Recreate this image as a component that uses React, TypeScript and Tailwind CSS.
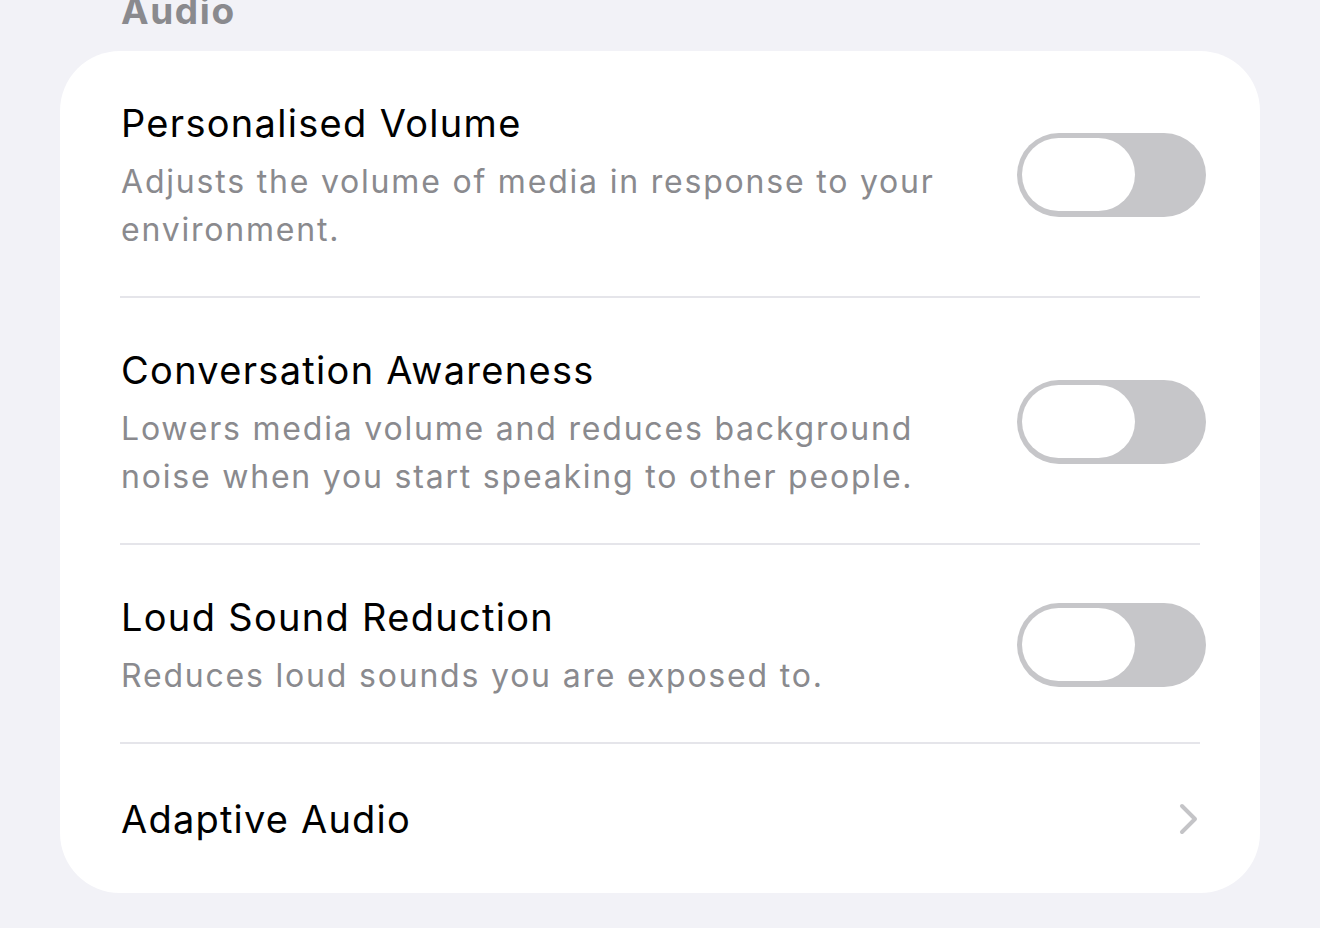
const rows = [
  {
    title: "Personalised Volume",
    lines: ["Adjusts the volume of media in response to your", "environment."],
  },
  {
    title: "Conversation Awareness",
    lines: ["Lowers media volume and reduces background", "noise when you start speaking to other people."],
  },
  {
    title: "Loud Sound Reduction",
    lines: ["Reduces loud sounds you are exposed to."],
  },
];

function Toggle() {
  return (
    <div className="mb-[4px] flex h-[84px] w-[189px] shrink-0 items-center rounded-full bg-[#c6c6c9] p-[5px]">
      <div className="h-[73px] w-[113px] rounded-full bg-white" />
    </div>
  );
}

function Chevron() {
  return (
    <svg width="22" height="32" viewBox="0 0 22 32" className="shrink-0">
      <polyline
        points="4,3 17,16 4,29"
        fill="none"
        stroke="#c4c4c7"
        strokeWidth="4"
        strokeLinecap="round"
        strokeLinejoin="round"
      />
    </svg>
  );
}

export default function App() {
  return (
    <div className="h-[928px] w-[1320px] overflow-hidden bg-[#f2f2f7] font-['Inter','Noto_Sans',sans-serif]">
      {/* Section header */}
      <p className="-mt-[9px] pl-[121px] text-[37px] font-bold leading-[40px] tracking-[1.6px] text-[#8a8a8e]">
        Audio
      </p>

      {/* Card */}
      <div className="mx-[60px] mt-[20px] rounded-[60px] bg-white">
        {rows.map((row, i) => (
          <div key={row.title}>
            {i > 0 && <div className="mx-[60px] h-[2px] bg-[#e5e5ea]" />}
            <div className="flex items-center pt-[48px] pb-[42px] pl-[61px] pr-[54px]">
              <div className="flex-1">
                <p className="text-[38px] leading-[48px] tracking-[1.3px] text-black">{row.title}</p>
                <div className="mt-[11px] text-[32px] leading-[48px] tracking-[1.8px] text-[#8a8a8e]">
                  {row.lines.map((l) => (
                    <p key={l}>{l}</p>
                  ))}
                </div>
              </div>
              <Toggle />
            </div>
          </div>
        ))}
        <div className="mx-[60px] h-[2px] bg-[#e5e5ea]" />
        <div className="flex items-center pt-[51px] pb-[50px] pl-[61px] pr-[60px]">
          <p className="flex-1 text-[38px] leading-[48px] tracking-[1.2px] text-black">Adaptive Audio</p>
          <Chevron />
        </div>
      </div>
    </div>
  );
}
